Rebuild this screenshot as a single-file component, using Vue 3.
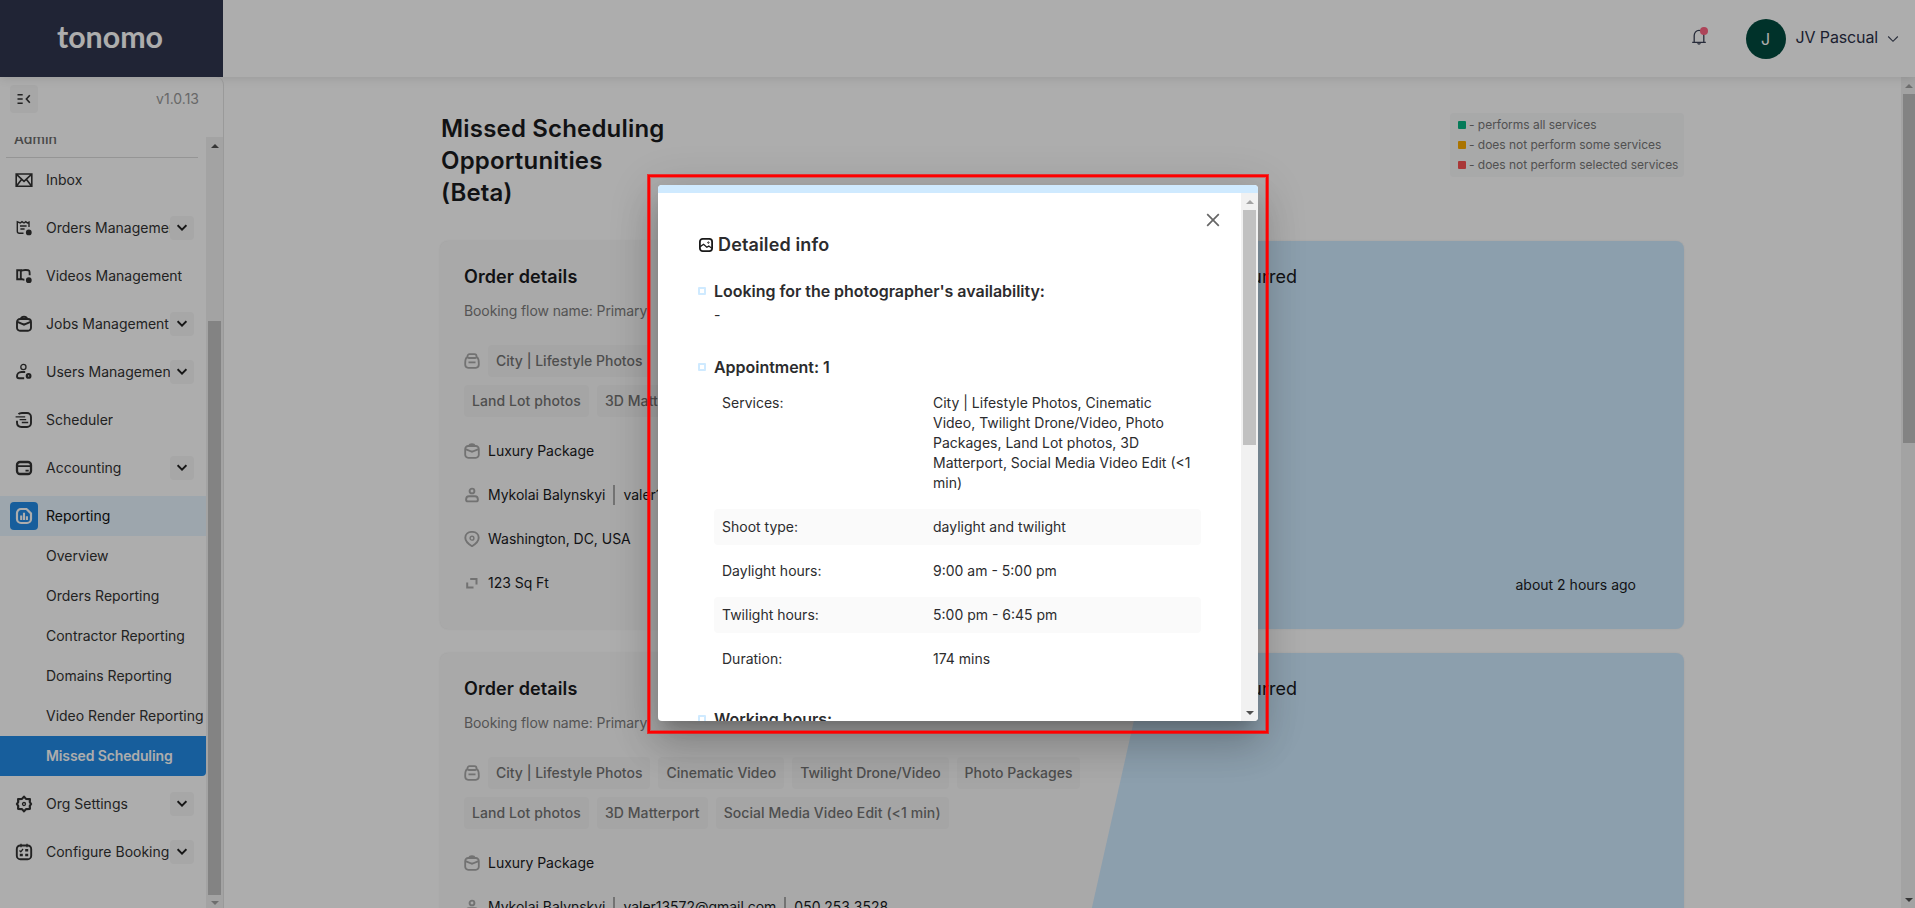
<script setup>
const nav = [
  { label: 'Inbox', icon: 'inbox' },
  { label: 'Orders Management', icon: 'orders', more: true },
  { label: 'Videos Management', icon: 'videos' },
  { label: 'Jobs Management', icon: 'jobs', more: true },
  { label: 'Users Management', icon: 'users', more: true },
  { label: 'Scheduler', icon: 'scheduler' },
  { label: 'Accounting', icon: 'accounting', more: true },
  {
    label: 'Reporting',
    icon: 'reporting',
    active: true,
    children: ['Overview', 'Orders Reporting', 'Contractor Reporting', 'Domains Reporting', 'Video Render Reporting', 'Missed Scheduling'],
  },
  { label: 'Org Settings', icon: 'settings', more: true },
  { label: 'Configure Booking', icon: 'booking', more: true },
]

const legend = [
  { color: 'green', text: '- performs all services' },
  { color: 'orange', text: '- does not perform some services' },
  { color: 'red', text: '- does not perform selected services' },
]

const services = ['City | Lifestyle Photos', 'Cinematic Video', 'Twilight Drone/Video', 'Photo Packages', 'Land Lot photos', '3D Matterport', 'Social Media Video Edit (<1 min)']

const orders = [1, 2]

const details = [
  { label: 'Services:', value: 'City | Lifestyle Photos, Cinematic\nVideo, Twilight Drone/Video, Photo\nPackages, Land Lot photos, 3D\nMatterport, Social Media Video Edit (<1\nmin)' },
  { label: 'Shoot type:', value: 'daylight and twilight' },
  { label: 'Daylight hours:', value: '9:00 am - 5:00 pm' },
  { label: 'Twilight hours:', value: '5:00 pm - 6:45 pm' },
  { label: 'Duration:', value: '174 mins' },
]
</script>

<template>
  <div class="app">
    <header class="header">
      <div class="brand">
        <svg width="110" height="30" viewBox="0 0 110 30">
          <text x="2" y="24" textLength="106" lengthAdjust="spacingAndGlyphs" class="wordmark">tonomo</text>
        </svg>
      </div>
      <div class="account">
        <div class="bell">
          <svg width="16" height="18" viewBox="0 0 16 18" fill="none" stroke="#3b4256" stroke-width="1.3">
            <path d="M1.2 14.3h13.6M3.2 14.2V7.6a4.8 5.2 0 0 1 9.6 0v6.6M6.6 15.3a1.5 1.2 0 0 0 2.8 0" />
          </svg>
          <i class="dot"></i>
        </div>
        <div class="avatar">J</div>
        <span class="username">JV Pascual</span>
        <svg class="caret" width="12" height="8" viewBox="0 0 12 8" fill="none" stroke="#3b4256" stroke-width="1.1"><path d="M1.2 1.5 6 6.3l4.8-4.8" /></svg>
      </div>
    </header>

    <div class="body">
      <aside class="sidebar">
        <div class="sidebar-top">
          <div class="collapse">
            <svg width="14" height="12" viewBox="0 0 14 12" fill="none" stroke="#333" stroke-width="1.6">
              <path d="M.5 1.8h5.2M.5 6h5.2M.5 10.2h5.2M12.8 2.2 9.4 6l3.4 3.8" />
            </svg>
          </div>
          <span class="version">v1.0.13</span>
        </div>
        <div class="nav-scroll">
          <nav class="nav">
            <div class="group">Admin</div>
            <div v-for="item in nav" :key="item.label" class="nav-block">
              <div class="nav-item" :class="{ active: item.active }">
                <span class="nav-icon">
                  <svg width="18" height="18" viewBox="0 0 18 18" fill="none" stroke="currentColor" stroke-width="1.9">
                    <path v-if="item.icon === 'inbox'" stroke-width="1.6" d="M1.2 3h15.6v12.2H1.2zM1.5 3.3 9 10.4l7.5-7.1M1.5 15l5-6.4M16.5 15l-5-6.4" />
                    <template v-else-if="item.icon === 'orders'">
                      <path stroke-width="1.4" d="M14 8V3.2l-1.6.8-1.6-1.4L9 4 7 2.6 5.2 4 2.3 2.8v9.4c0 1.4.8 2 2 2h4.2M5 7h6.6M5.4 10h4.2" />
                      <circle cx="13.8" cy="13.4" r="2" fill="currentColor" stroke-width="1.8" />
                    </template>
                    <template v-else-if="item.icon === 'videos'">
                      <path d="M5.8 3.2H2.2v9h3.6zM5.8 4.2c1.400-1.600 7.600-1.600 8.400-.4.5.8.5 2.400.5 4.400M5.800 11.400c1 1 2 1.400 3.600 1.400" />
                      <circle cx="13.8" cy="13.2" r="2" fill="currentColor" stroke-width="1.8" />
                    </template>
                    <path v-else-if="item.icon === 'jobs'" d="M5 4h8a3 3 0 0 1 3 3v5.800a3 3 0 0 1-3 3H5a3 3 0 0 1-3-3V7a3 3 0 0 1 3-3zM6 3.500Q6.400 1.700 9 1.700t3 1.800M2.400 6.800 9 9.600l6.600-2.800M9 8.200v2.600" />
                    <template v-else-if="item.icon === 'users'">
                      <circle cx="8.400" cy="4" r="2.600" stroke-width="1.3" />
                      <path d="M10.200 9H6.400C4 9 2 11 2 13.200c0 1.600.6 2 2 2h5.200" />
                      <circle cx="13.600" cy="12.900" r="1.800" stroke-width="2.200" />
                    </template>
                    <template v-else-if="item.icon === 'scheduler'">
                      <path d="M3.500 3.200Q4.500 2 7 2h5a4 4 0 0 1 4 4v6a4 4 0 0 1-4 4H6.500Q2 16 2 11.600V9.800" />
                      <path stroke-width="1.300" d="M.6 5.800h9.600M4.600 8.600h6.600M6.800 11.500h6.400" />
                    </template>
                    <template v-else-if="item.icon === 'accounting'">
                      <rect x="2" y="3" width="14" height="12" rx="3" stroke-width="2.300" />
                      <path stroke-width="1.800" d="M2 7.200h14M10.500 11.600h3.200" />
                    </template>
                    <template v-else-if="item.icon === 'reporting'">
                      <path d="M6 2h5.500L16 6.500V12a4 4 0 0 1-4 4H6a4 4 0 0 1-4-4V6a4 4 0 0 1 4-4z" stroke-width="2.200" />
                      <path stroke-width="2.100" d="M6.200 8.500V13M9 5.800V13M11.900 9.300V13" />
                    </template>
                    <template v-else-if="item.icon === 'settings'">
                      <path stroke-width="2.200" stroke-linejoin="round" d="M9 1.600 11 3.900l3.900.2 0 0-.1 3 1.300 1.900-1.300 1.900.1 3-3.900.2L9 16.400 7 14.100l-3.900-.2.1-3L1.900 9l1.300-1.900-.1-3L7 3.900z" />
                      <circle cx="9" cy="9" r="1.500" stroke-width="1.300" />
                    </template>
                    <template v-else>
                      <rect x="1.800" y="2.500" width="14.400" height="13.700" rx="3.500" />
                      <path stroke-width="1.300" d="M6 .8v3.400M12 .8v3.400M4.500 7.600l1.300 1.200L8 6" />
                      <path stroke-width="2.600" d="M10.200 7.300h3M4.800 12h3M10.200 12h3" />
                    </template>
                  </svg>
                </span>
                <span class="nav-label" :class="{ clipped: item.more }">{{ item.label }}</span>
                <span v-if="item.more" class="more">
                  <svg width="10" height="8" viewBox="0 0 10 8" fill="none" stroke="#222" stroke-width="1.900"><path d="M.6 1.200 5 5.600l4.400-4.400" /></svg>
                </span>
              </div>
              <div v-for="c in item.children" :key="c" class="sub" :class="{ selected: c === 'Missed Scheduling' }">{{ c }}</div>
            </div>
          </nav>
          <div class="bar side-bar">
            <i class="arrow up dark"></i>
            <i class="thumb"></i>
            <i class="arrow down"></i>
          </div>
        </div>
      </aside>

      <main class="main">
        <div class="content">
          <div class="intro">
            <h1>Missed Scheduling<br />Opportunities<br />(Beta)</h1>
            <ul class="legend">
              <li v-for="l in legend" :key="l.color"><i :class="l.color"></i>{{ l.text }}</li>
            </ul>
          </div>

          <section v-for="o in orders" :key="o" class="card">
            <div class="order">
              <h2>Order details</h2>
              <p class="flow">Booking flow name: Primary</p>
              <div class="chips">
                <svg class="chip-icon" width="16" height="16" viewBox="0 0 16 16" fill="none" stroke="#a8a8a8" stroke-width="1.800">
                  <path d="M2.800 4.200C1 6 1.200 7.200 1.200 11.600c0 2.200 1 3.200 3 3.200h7.600c2 0 3-1 3-3.200 0-4.400.2-5.600-1.600-7.400M5.500 1.200h5a2 2 0 0 1 2 2v.6a1.200 1.200 0 0 1-1.200 1.200H4.700a1.200 1.200 0 0 1-1.200-1.200v-.6a2 2 0 0 1 2-2zM4.500 9.400h7" />
                </svg>
                <span v-for="s in services" :key="s" class="chip">{{ s }}</span>
              </div>
              <ul class="facts">
                <li>
                  <svg width="16" height="16" viewBox="0 0 16 16" fill="none" stroke="#a8a8a8" stroke-width="1.800"><path d="M4.200 3h7.600a3 3 0 0 1 3 3v5.800a3 3 0 0 1-3 3H4.200a3 3 0 0 1-3-3V6a3 3 0 0 1 3-3zM5.300 2.600Q5.600 1.200 8 1.200t2.700 1.400M1.500 6.200 8 8.800l6.500-2.600M8 7.600v2.200" /></svg>
                  Luxury Package
                </li>
                <li>
                  <svg width="16" height="16" viewBox="0 0 16 16" fill="none" stroke="#a8a8a8" stroke-width="1.900"><circle cx="8" cy="4" r="2.400" /><path d="M5 9.300h6c1.800 0 2.900 1.700 2.900 3.400 0 1.200-.6 1.700-1.700 1.700H3.800c-1.100 0-1.700-.5-1.700-1.700 0-1.700 1.100-3.400 2.900-3.400z" /></svg>
                  Mykolai Balynskyi<i class="sep"></i>valer13572@gmail.com<i class="sep"></i>050 253 3528
                </li>
                <li>
                  <svg width="16" height="16" viewBox="0 0 16 16" fill="none" stroke="#a8a8a8" stroke-width="1.900"><path d="M8 15.200C5 13.400 1.300 10.600 1.300 6.800 1.300 3.200 4.300.9 8 .9s6.700 2.300 6.700 5.900c0 3.800-3.700 6.600-6.700 8.400z" /><circle cx="8" cy="7.200" r="1.900" stroke-width="1.400" /></svg>
                  Washington, DC, USA
                </li>
                <li>
                  <svg width="16" height="16" viewBox="0 0 16 16" fill="none" stroke="#a8a8a8" stroke-width="2"><path d="M6.200 4h6.300v5.500M3.200 7.500v5h6.300" /></svg>
                  123 Sq Ft
                </li>
              </ul>
            </div>
            <div class="panel">
              <h3>Error occurred</h3>
              <span class="ago">about 2 hours ago</span>
            </div>
          </section>
        </div>
        <div class="bar page-bar">
          <i class="arrow up"></i>
          <i class="thumb"></i>
          <i class="arrow down dark"></i>
        </div>
      </main>
    </div>

    <div class="overlay"></div>
    <div class="highlight"></div>

    <div class="modal">
      <div class="modal-strip"></div>
      <div class="modal-body">
        <div class="modal-content">
          <div class="modal-title">
            <svg width="14" height="14" viewBox="0 0 14 14" fill="none" stroke="#1a1a1a" stroke-width="1.800">
              <rect x=".9" y=".9" width="12.200" height="12.200" rx="2.800" />
              <path stroke-width="1.300" d="M1.200 8.600 4.600 6.300l3.200 3 2-1.200 3 2.200" /><circle cx="9.400" cy="4.600" r=".7" stroke-width="1" />
            </svg>
            Detailed info
          </div>
          <h4 class="h">Looking for the photographer's availability:</h4>
          <p class="dash">-</p>
          <h4 class="h">Appointment: 1</h4>
          <dl class="rows">
            <div v-for="d in details" :key="d.label" class="row">
              <dt>{{ d.label }}</dt>
              <dd>{{ d.value }}</dd>
            </div>
          </dl>
          <h4 class="h">Working hours:</h4>
          <svg class="close" width="14" height="14" viewBox="0 0 14 14" fill="none" stroke="#666" stroke-width="1.700"><path d="M1.200 1.200l11.600 11.600M12.800 1.200 1.200 12.800" /></svg>
        </div>
        <div class="bar modal-bar">
          <i class="arrow up"></i>
          <i class="thumb"></i>
          <i class="arrow down dark"></i>
        </div>
      </div>
    </div>
  </div>
</template>

<style>
html,
body {
  margin: 0;
  overflow: hidden;
}
</style>

<style scoped>
.app,
.app *,
.app *::before {
  box-sizing: border-box;
}
.app {
  position: relative;
  display: flex;
  flex-direction: column;
  width: 1915px;
  height: 908px;
  overflow: hidden;
  background: #fff;
  color: #1a1b1e;
  font: 400 14px/20px Inter, 'Liberation Sans', sans-serif;
}
h1, h2, h3, h4, p, ul, dl, dd {
  margin: 0;
  padding: 0;
}
ul {
  list-style: none;
}
svg {
  display: block;
  flex: none;
}

.header {
  position: relative;
  z-index: 1;
  display: flex;
  flex: none;
  justify-content: space-between;
  height: 77px;
  background: #fff;
  box-shadow: 0 1px 10px rgba(0, 0, 0, 0.12);
}
.brand {
  display: flex;
  align-items: center;
  justify-content: center;
  width: 223px;
  padding-right: 3px;
  background: #30354e;
}
.wordmark {
  font: 700 30px Lato, sans-serif;
  fill: #fff;
}
.account {
  display: flex;
  align-items: center;
  padding-right: 16px;
}
.bell {
  position: relative;
  width: 16px;
  margin: 0 39px 4px 0;
}
.dot {
  position: absolute;
  top: -1px;
  left: 9px;
  width: 8px;
  height: 8px;
  border-radius: 50%;
  background: #ff6583;
}
.avatar {
  width: 40px;
  height: 40px;
  margin-top: 1px;
  border-radius: 50%;
  background: #004a3e;
  color: #fff;
  font-size: 16px;
  line-height: 40px;
  text-align: center;
}
.username {
  margin: 0 9px 3px 10px;
  color: #2b3048;
  font-size: 16px;
  letter-spacing: -0.14px;
}

.body {
  display: flex;
  flex: 1;
  min-height: 0;
}
.sidebar {
  display: flex;
  flex: none;
  flex-direction: column;
  width: 224px;
  border-right: 1px solid #e4e4e4;
  border-top-right-radius: 8px;
  color: #333;
}
.sidebar-top {
  display: flex;
  flex: none;
  justify-content: space-between;
  height: 60px;
  padding: 8px 24px 0 10px;
}
.collapse {
  display: flex;
  align-items: center;
  justify-content: center;
  width: 28px;
  height: 28px;
  border-radius: 4px;
  background: #f6f6f6;
}
.version {
  margin-top: 4px;
  color: #999;
}
.nav-scroll {
  display: flex;
  flex: 1;
  min-height: 0;
}
.nav {
  width: 206px;
  overflow: hidden;
}
.group {
  height: 21px;
  margin: 0 8px 2px 6px;
  padding-left: 8px;
  border-bottom: 1px solid #dcdcdc;
  color: #6a6a6a;
  font-weight: 500;
  line-height: 3px;
}
.nav-block {
  margin-bottom: 8px;
}
.nav-item {
  display: flex;
  align-items: center;
  height: 40px;
  padding: 0 12px 0 10px;
}
.nav-icon {
  display: flex;
  flex: none;
  align-items: center;
  justify-content: center;
  width: 28px;
  height: 28px;
  margin-right: 8px;
  border-radius: 4px;
}
.active {
  background: #e7f5ff;
  color: #111;
}
.active .nav-icon {
  background: #228be6;
  color: #fff;
}
.nav-label,
.sub {
  overflow: hidden;
  white-space: nowrap;
}
.clipped {
  width: 124px;
  flex: none;
}
.more {
  display: flex;
  flex: none;
  align-items: center;
  justify-content: center;
  width: 24px;
  height: 24px;
  border-radius: 4px;
  background: #f6f6f6;
}
.sub {
  height: 40px;
  padding-left: 46px;
  line-height: 40px;
}
.selected {
  border-bottom-right-radius: 4px;
  background: #228be6;
  color: #fff;
  font-weight: 600;
  letter-spacing: -0.12px;
}

.bar {
  display: flex;
  flex: none;
  flex-direction: column;
  align-items: center;
  width: 17px;
  background: #f1f1f1;
}
.arrow {
  width: 0;
  height: 0;
  margin: 7px 0 6px;
  border: 4px solid transparent;
  color: #a3a3a3;
}
.arrow.dark {
  color: #505050;
}
.up {
  border-top: 0;
  border-bottom-color: currentColor;
}
.down {
  margin-top: auto;
  border-bottom: 0;
  border-top-color: currentColor;
}
.thumb {
  flex: none;
  width: 13px;
  background: #c1c1c1;
}
.side-bar .thumb {
  height: 574px;
  margin-top: 167px;
}
.side-bar .down {
  margin-bottom: 3px;
}

.main {
  display: flex;
  flex: 1;
  justify-content: space-between;
  min-width: 0;
}
.content {
  width: 1244px;
  margin-left: 216px;
  padding-top: 36px;
}
.intro {
  display: flex;
  align-items: flex-start;
  justify-content: space-between;
  height: 128px;
}
h1 {
  padding-left: 1px;
  font-weight: 600;
  font-size: 24px;
  line-height: 32px;
  letter-spacing: 0.18px;
}
.legend {
  width: 234px;
  padding: 2px 0 2px 8px;
  border-radius: 4px;
  background: #f8f9fa;
  color: #777;
  font-size: 12px;
  letter-spacing: -0.02px;
  white-space: nowrap;
}
.legend li {
  display: flex;
  align-items: center;
  height: 20px;
}
.legend i {
  width: 8px;
  height: 8px;
  margin-right: 3px;
  border-radius: 1px;
}
.green {
  background: #08b584;
}
.orange {
  background: #fbac00;
}
.red {
  background: #fa5252;
}
.card {
  display: flex;
  height: 388px;
  margin-bottom: 24px;
  overflow: hidden;
  border-radius: 8px;
  background: #f9f9f9;
  box-shadow: 0 0 2px rgba(0, 0, 0, 0.08);
}
.order {
  width: 622px;
  padding: 24px 0 0 24px;
}
h2 {
  font-weight: 600;
  font-size: 18px;
  line-height: 24px;
  letter-spacing: 0.1px;
}
.flow {
  margin-top: 12px;
  color: #7d7d7d;
  letter-spacing: -0.1px;
}
.chips {
  display: flex;
  flex-wrap: wrap;
  align-items: center;
  gap: 8px;
  width: 660px;
  margin-top: 24px;
}
.chip {
  height: 32px;
  padding: 0 8px;
  border-radius: 4px;
  background: #f4f4f4;
  color: #737373;
  font-weight: 500;
  line-height: 32px;
  white-space: nowrap;
}
.chip:nth-child(n + 6) {
  letter-spacing: 0.08px;
}
.facts {
  margin-top: 12px;
}
.facts li {
  display: flex;
  align-items: center;
  height: 44px;
  letter-spacing: -0.03px;
  white-space: nowrap;
}
.facts svg {
  margin-right: 8px;
}
.sep {
  width: 2px;
  height: 20px;
  margin: 0 8px;
  background: #aaa;
}
.panel {
  display: flex;
  flex-direction: column;
  justify-content: space-between;
  width: 622px;
  padding: 24px 48px 34px 0;
  background: #cfeaff;
  clip-path: polygon(14% 0, 100% 0, 100% 100%, 0 100%);
}
h3 {
  width: 235px;
  font-weight: 400;
  font-size: 18px;
  line-height: 24px;
  text-align: right;
}
.ago {
  text-align: right;
}
.page-bar {
  align-self: stretch;
  width: 14px;
  align-items: flex-start;
  padding-left: 2px;
}
.page-bar .arrow {
  margin-left: 2px;
}
.page-bar .thumb {
  width: 12px;
  height: 349px;
}

.overlay {
  position: absolute;
  z-index: 2;
  inset: 0;
  background: rgba(0, 0, 0, 0.32);
}
.highlight {
  position: absolute;
  z-index: 4;
  top: 175px;
  left: 648px;
  width: 620px;
  height: 558px;
  border: 2px solid #f00;
  box-shadow: 0 0 0 1px rgba(255, 0, 0, 0.7), inset 0 0 0 1px rgba(255, 0, 0, 0.4);
}
.modal {
  position: absolute;
  z-index: 3;
  top: 185px;
  left: 658px;
  display: flex;
  flex-direction: column;
  width: 600px;
  height: 536px;
  overflow: hidden;
  border-radius: 4px;
  background: #fff;
  color: #2c2c2e;
  box-shadow: 0 11px 15px -7px rgba(0, 0, 0, 0.2), 0 24px 38px 3px rgba(0, 0, 0, 0.14), 0 9px 46px 8px rgba(0, 0, 0, 0.12);
}
.modal-strip {
  flex: none;
  height: 8px;
  background: #cfeaff;
}
.modal-body {
  display: flex;
  flex: 1;
  min-height: 0;
}
.modal-content {
  position: relative;
  flex: 1;
  padding: 38px 40px 0;
  overflow: hidden;
}
.modal-title {
  display: flex;
  align-items: center;
  gap: 5px;
  height: 28px;
  margin: 0 0 20px 1px;
  font-weight: 600;
  font-size: 18px;
  letter-spacing: 0.14px;
}
.h {
  display: flex;
  align-items: center;
  gap: 8px;
  font-weight: 600;
  font-size: 16px;
  line-height: 24px;
  letter-spacing: -0.03px;
}
.h::before {
  width: 8px;
  height: 8px;
  border: 2px solid #cfeaff;
  border-radius: 1px;
  content: '';
}
.dash {
  height: 22px;
  margin: 0 0 30px 16px;
  line-height: 24px;
}
.rows {
  display: flex;
  flex-direction: column;
  gap: 8px;
  width: 487px;
  margin: 6px 0 30px 16px;
}
.row {
  display: flex;
  padding: 8px;
  border-radius: 4px;
}
.row:nth-child(even) {
  background: #fafafa;
}
dt {
  flex: none;
  width: 211px;
}
dd {
  white-space: pre;
}
.close {
  position: absolute;
  top: 20px;
  right: 21px;
}
.modal-bar .thumb {
  height: 235px;
}
</style>
